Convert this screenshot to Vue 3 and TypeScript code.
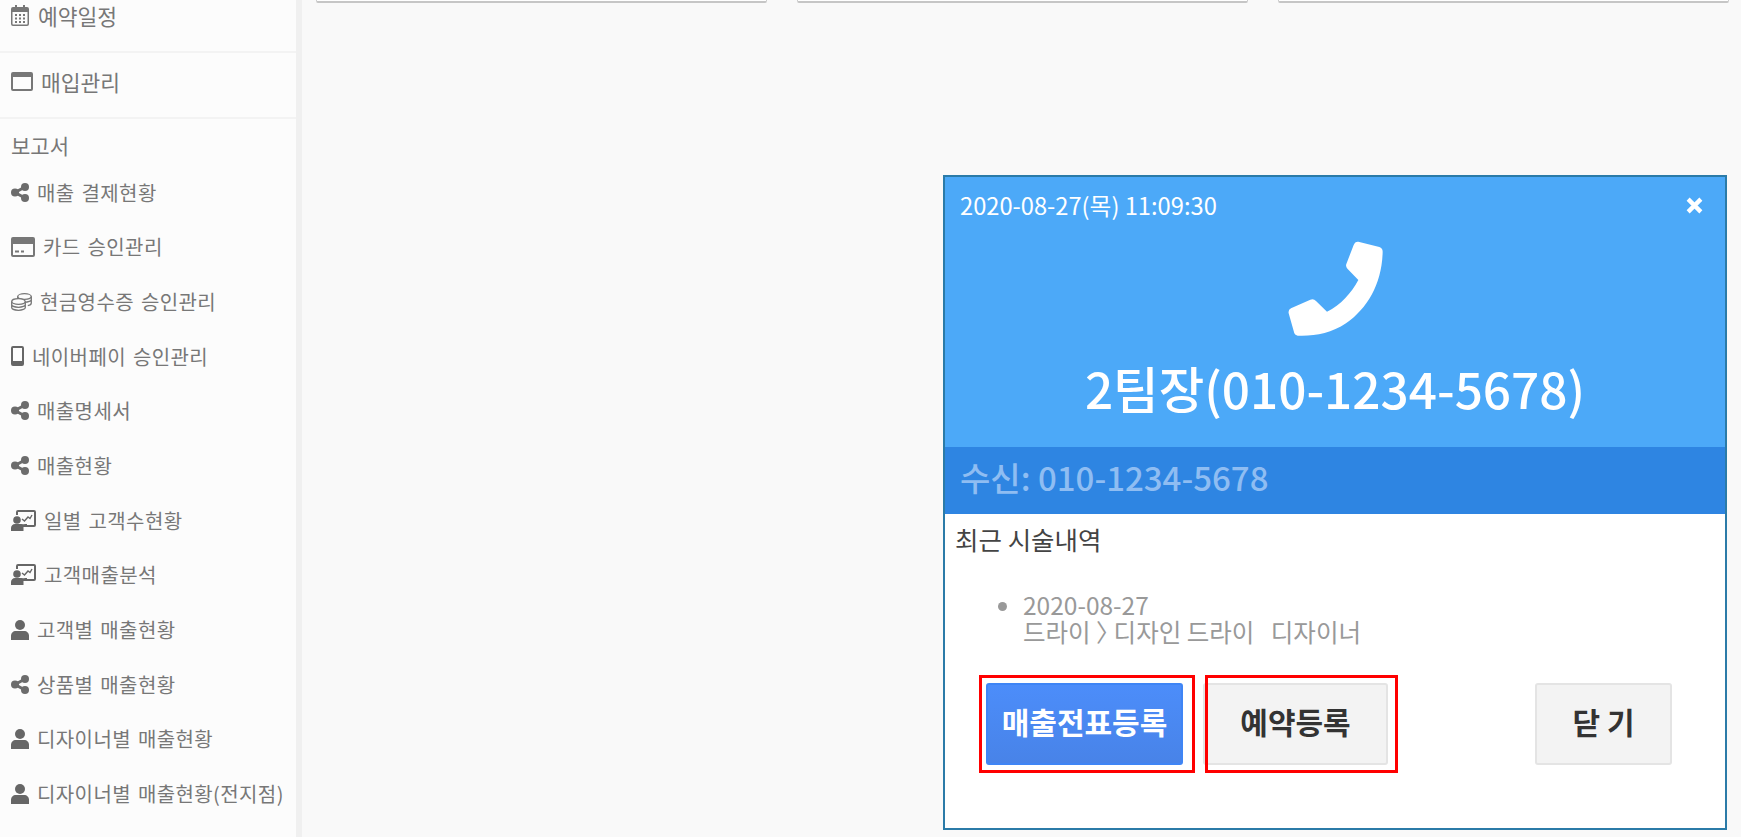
<script setup lang="ts">
type IconName = 'share' | 'card' | 'coins' | 'mobile' | 'board' | 'user'

interface MenuItem {
  icon: IconName
  label: string
}

const reportItems: MenuItem[] = [
  { icon: 'share', label: '매출 결제현황' },
  { icon: 'card', label: '카드 승인관리' },
  { icon: 'coins', label: '현금영수증 승인관리' },
  { icon: 'mobile', label: '네이버페이 승인관리' },
  { icon: 'share', label: '매출명세서' },
  { icon: 'share', label: '매출현황' },
  { icon: 'board', label: '일별 고객수현황' },
  { icon: 'board', label: '고객매출분석' },
  { icon: 'user', label: '고객별 매출현황' },
  { icon: 'share', label: '상품별 매출현황' },
  { icon: 'user', label: '디자이너별 매출현황' },
  { icon: 'user', label: '디자이너별 매출현황(전지점)' }
]
</script>

<template>
  <div class="page">
    <aside class="side">
      <div class="top-item first">
        <svg class="ico" viewBox="0 0 18 21" width="18" height="21"><path fill="#777" fill-rule="evenodd" d="M4 0h2v2h6V0h2v2h2a2 2 0 0 1 2 2v15a2 2 0 0 1-2 2H2a2 2 0 0 1-2-2V4a2 2 0 0 1 2-2h2zM1.500 7v12c0 .3.2.5.5.5h14c.3 0 .5-.2.5-.5V7z"/><path fill="#777" d="M4 9h2v2H4zM8 9h2v2H8zM12 9h2v2h-2zM4 12.500h2v2H4zM8 12.500h2v2H8zM12 12.500h2v2h-2zM4 16h2v2H4zM8 16h2v2H8zM12 16h2v2h-2z"/></svg>
        <span class="lbl big">예약일정</span>
      </div>
      <div class="top-item second">
        <svg class="ico" viewBox="0 0 22 19" width="22" height="19"><path fill="#777" fill-rule="evenodd" d="M2 0h18a2 2 0 0 1 2 2v15a2 2 0 0 1-2 2H2a2 2 0 0 1-2-2V2a2 2 0 0 1 2-2zm0 5v12h18V5z"/></svg>
        <span class="lbl big">매입관리</span>
      </div>
      <div class="group-title">보고서</div>
      <ul class="menu">
        <li v-for="item in reportItems" :key="item.label">
          <svg v-if="item.icon === 'share'" class="ico" viewBox="0 0 18 19" width="18" height="19"><path stroke="#6c6c6c" stroke-width="3" fill="none" d="M14 4L4 9.500l10 5.500"/><circle cx="4" cy="9.500" r="4" fill="#6c6c6c"/><circle cx="14" cy="4" r="4" fill="#6c6c6c"/><circle cx="14" cy="15" r="4" fill="#6c6c6c"/></svg>
          <svg v-else-if="item.icon === 'card'" class="ico" viewBox="0 0 24 20" width="24" height="20"><path fill="#777" fill-rule="evenodd" d="M2 0h20a2 2 0 0 1 2 2v16a2 2 0 0 1-2 2H2a2 2 0 0 1-2-2V2a2 2 0 0 1 2-2zm0 7v11h20V7z"/><path fill="#777" d="M4 13.500h4v2H4zM10 13.500h3v2h-3z"/></svg>
          <svg v-else-if="item.icon === 'coins'" class="ico" viewBox="0 0 21 18" width="21" height="18" fill="none" stroke="#777" stroke-width="1.300"><ellipse cx="13.500" cy="3.500" rx="6.800" ry="2.800"/><path d="M6.700 3.500v3c0 1.500 3 2.800 6.800 2.800s6.800-1.300 6.800-2.800v-3M20.300 6.500v3.500c0 1.200-1.500 2.300-3.500 2.600"/><ellipse cx="7.500" cy="8.500" rx="6.800" ry="2.800" fill="#fcfcfc"/><path d="M.7 8.500v3c0 1.500 3 2.800 6.800 2.800s6.800-1.300 6.800-2.800v-3M.7 11.500v3c0 1.500 3 2.800 6.800 2.800s6.800-1.300 6.800-2.800v-3"/></svg>
          <svg v-else-if="item.icon === 'mobile'" class="ico" viewBox="0 0 13 20" width="13" height="20"><path fill="#666" fill-rule="evenodd" d="M2 0h9a2 2 0 0 1 2 2v16a2 2 0 0 1-2 2H2a2 2 0 0 1-2-2V2a2 2 0 0 1 2-2zm0 2v13h9V2z"/></svg>
          <svg v-else-if="item.icon === 'board'" class="ico board" viewBox="0 0 25 21" width="25" height="21"><path fill="#666" d="M7 0h16a2 2 0 0 1 2 2v13a2 2 0 0 1-2 2h-8v-2h8V2H7v3H5V2a2 2 0 0 1 2-2z"/><circle cx="6" cy="10" r="3.800" fill="#666"/><path fill="#666" d="M0 21v-3c0-2.200 1.800-4 4-4h4c2.500 0 4 .5 6 0h2v3h-3.500v4z"/><path fill="none" stroke="#666" stroke-width="1.400" d="M11 9l2.500 2 3.500-4 2 1.500L21 5"/></svg>
          <svg v-else class="ico" viewBox="0 0 18 20" width="18" height="20"><circle cx="9" cy="5" r="5" fill="#666"/><path fill="#666" d="M0 20v-4c0-3 2-5 5-5h8c3 0 5 2 5 5v4z"/></svg>
          <span class="lbl">{{ item.label }}</span>
        </li>
      </ul>
    </aside>
    <div class="gutter"></div>
    <main class="main">
      <div class="cards">
        <div class="card"></div>
        <div class="card"></div>
        <div class="card"></div>
      </div>

      <section class="popup">
        <header class="pop-head">
          <div class="pop-time">
            <span>2020-08-27(목) 11:09:30</span>
            <svg viewBox="0 0 16 16" width="17" height="17"><path d="M2 2l12 12M14 2L2 14" stroke="#fff" stroke-width="4" fill="none"/></svg>
          </div>
          <svg class="phone" viewBox="48 48 288 288" width="96" height="96"><path fill="#fff" d="M262 50L325 66Q335 69 335 80C333 175 290 250 225 295C180 325 130 334 80 332Q72 331 70 325L53 265Q51 254 60 250L118 224Q128 220 135 228L168 260C210 240 240 205 262 165L230 132Q223 125 226 117L248 60Q252 49 262 50Z"/></svg>
          <div class="pop-name">2팀장(010-1234-5678)</div>
        </header>
        <div class="pop-band">수신: 010-1234-5678</div>
        <div class="pop-body">
          <h4>최근 시술내역</h4>
          <ul class="history">
            <li>2020-08-27<br>드라이 <span class="chev">〉</span>디자인 드라이 &nbsp; 디자이너</li>
          </ul>
          <div class="actions">
            <span class="mark mark-a"><button class="btn primary">매출전표등록</button></span>
            <span class="mark mark-b"><button class="btn">예약등록</button></span>
            <button class="btn close">닫 기</button>
          </div>
        </div>
      </section>
    </main>
  </div>
</template>

<style>
html, body {
  margin: 0;
  overflow: hidden;
}
</style>

<style scoped>
.page {
  display: flex;
  width: 1741px;
  height: 837px;
  overflow: hidden;
  background: #f9f9f9;
  font-family: "Noto Sans CJK KR", "Noto Sans", sans-serif;
}
.side {
  width: 296px;
  flex: none;
  background: #fcfcfc;
  color: #777;
  font-size: 20px;
  letter-spacing: .4px;
}
.gutter {
  width: 6px;
  flex: none;
  background: #f0f0f0;
}
.main {
  flex: 1;
  position: relative;
  padding-left: 14px;
}
.top-item {
  display: flex;
  align-items: center;
  padding-left: 11px;
  border-bottom: 2px solid #f3f3f3;
  box-sizing: border-box;
}
.top-item.first {
  height: 53px;
  padding-bottom: 21px;
}
.top-item.second {
  height: 66px;
  padding-bottom: 7px;
}
.lbl {
  margin-left: 8px;
  white-space: nowrap;
  word-spacing: 2px;
}
.lbl.big {
  margin-left: 9px;
  font-size: 21.500px;
  letter-spacing: 0;
}
.second .lbl.big {
  margin-left: 8px;
}
.group-title {
  padding: 12px 0 0 11px;
  height: 34px;
  font-size: 21px;
  letter-spacing: 0;
  line-height: 28px;
}
.menu {
  list-style: none;
  margin: 0;
  padding: 0;
}
.menu li {
  display: flex;
  align-items: center;
  height: 54.670px;
  padding-left: 11px;
}
.ico {
  flex: none;
}
.cards {
  display: flex;
  gap: 30px;
  margin-top: -19px;
}
.card {
  width: 451px;
  height: 22px;
  flex: none;
  background: #fff;
  border: 1px solid #ccc;
  border-bottom: 2px solid #c6c6c6;
  border-radius: 2px;
  box-sizing: border-box;
}
.popup {
  position: absolute;
  left: 641px;
  top: 175px;
  width: 784px;
  height: 655px;
  box-sizing: border-box;
  border: 2px solid #2b7ba8;
  background: #fff;
  display: flex;
  flex-direction: column;
}
.pop-head {
  height: 270px;
  flex: none;
  background: #4ca9f8;
  color: #fff;
  display: flex;
  flex-direction: column;
  align-items: center;
}
.pop-time {
  align-self: stretch;
  display: flex;
  justify-content: space-between;
  align-items: center;
  padding: 14px 22px 0 15px;
  font-size: 23.700px;
  line-height: 28px;
}
.phone {
  margin-top: 22px;
}
.pop-name {
  margin-top: 18px;
  font-size: 49.500px;
  font-weight: 500;
  line-height: 66px;
  white-space: nowrap;
}
.pop-band {
  height: 67px;
  box-sizing: border-box;
  flex: none;
  background: #2e85e2;
  color: #8fbdf2;
  font-size: 33px;
  font-weight: 500;
  line-height: 60px;
  padding: 0 0 6px 15px;
}
.pop-body {
  flex: 1;
  padding: 7px 0 0 10px;
}
.pop-body h4 {
  margin: 0;
  font-size: 25.500px;
  font-weight: 400;
  line-height: 36px;
  color: #444;
}
.history {
  margin: 34px 0 0;
  padding-left: 68px;
  color: #999;
  font-size: 24.500px;
  line-height: 27px;
}
.chev {
  letter-spacing: -7px;
}
.actions {
  display: flex;
  align-items: center;
  margin: 30px 0 0 24px;
}
.mark {
  position: relative;
  display: flex;
  align-items: center;
  box-sizing: border-box;
  height: 98px;
}
.mark::after {
  content: "";
  position: absolute;
  inset: 0;
  border: 3px solid #f00;
  pointer-events: none;
}
.mark-a {
  width: 216px;
  padding-left: 7px;
}
.mark-b {
  width: 193px;
  margin-left: 10px;
  margin-right: 137px;
}
.btn {
  height: 82px;
  font-family: inherit;
  font-size: 30px;
  font-weight: 700;
  line-height: 72px;
  color: #333;
  background: #f3f3f3;
  border: 2px solid #e4e4e4;
  border-radius: 3px;
  padding: 0 0 8px;
}
.primary {
  width: 197px;
  background: linear-gradient(#4c8dfa, #4883e8);
  border-color: #3f85f5;
  color: #fff;
}
.mark-b .btn {
  width: 185px;
  margin-left: -2px;
}
.close {
  width: 137px;
}
</style>
